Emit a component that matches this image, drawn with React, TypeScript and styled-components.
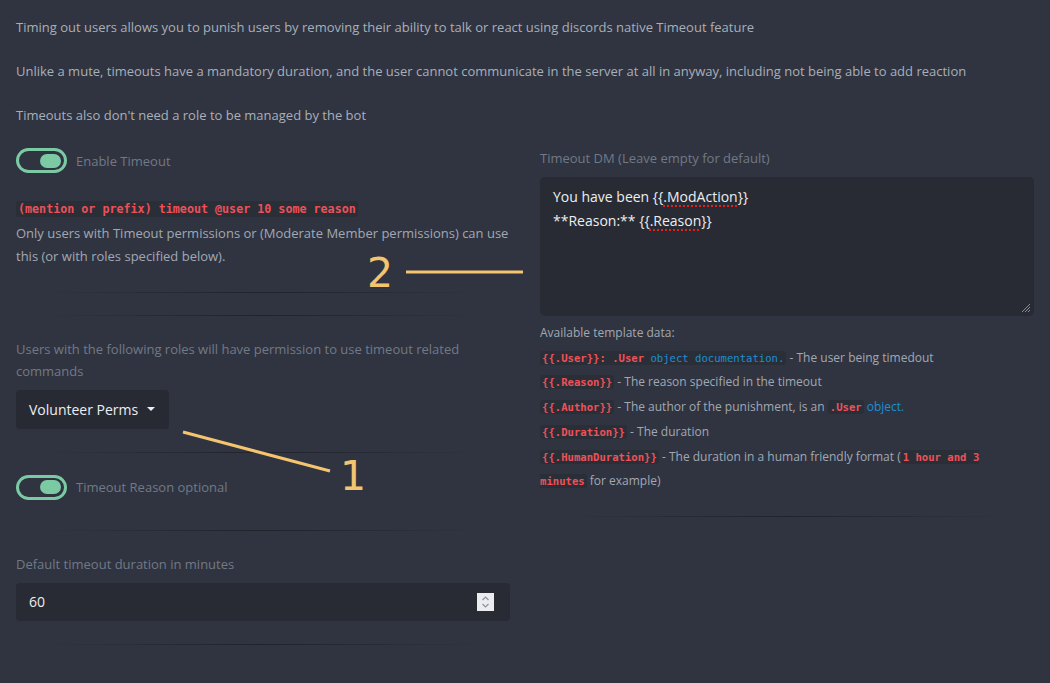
import React from 'react';
import styled, { createGlobalStyle } from 'styled-components';

const GlobalStyle = createGlobalStyle`
  html, body {
    margin: 0;
    padding: 0;
    background: #2f3440;
  }
  body {
    font-family: "Open Sans", "Noto Sans", sans-serif;
    color: #a9afba;
  }
  * { box-sizing: border-box; }
`;

const Page = styled.div`
  position: relative;
  width: 1050px;
  height: 683px;
  overflow: hidden;
  padding: 17px 16px 0;
`;

const Intro = styled.p`
  margin: 0 0 24px;
  font-size: 13px;
  line-height: 20px;
  color: #a9afba;
`;

const Row = styled.div`
  display: grid;
  grid-template-columns: 494px 494px;
  column-gap: 30px;
  margin-top: -2px;
`;

const Column = styled.div`
  display: flex;
  flex-direction: column;
`;

const ToggleRow = styled.label<{ $top?: number }>`
  display: flex;
  align-items: center;
  gap: 9px;
  height: 25px;
  margin-top: ${p => p.$top ?? 0}px;
  font-size: 13px;
  color: #727986;
`;

const Switch = styled.span`
  position: relative;
  display: inline-block;
  width: 51px;
  height: 25px;
  border: 3px solid #7ccaa4;
  border-radius: 13px;

  &::after {
    content: '';
    position: absolute;
    right: 3px;
    top: 2.5px;
    width: 21px;
    height: 14px;
    border-radius: 7px;
    background: #7ccaa4;
  }
`;

const Help = styled.p`
  margin: 24px 0 0;
  font-size: 13px;
  line-height: 23.5px;
  color: #a2a8b3;
`;

const Code = styled.code<{ $size?: number }>`
  font-family: "DejaVu Sans Mono", "Liberation Mono", monospace;
  font-size: ${p => p.$size ?? 11.7}px;
  font-weight: bold;
  color: #ee5159;
  background: #2a2e37;
  padding: 1px 2px;
  border-radius: 3px;
`;

const CodeLink = styled.span`
  color: #1d8ed3;
  font-weight: normal;
`;

const Link = styled.span`
  color: #1d8ed3;
`;

const Divider = styled.div<{ $top: number }>`
  height: 1px;
  margin-top: ${p => p.$top}px;
  background: linear-gradient(to right, rgba(30, 33, 40, 0) 5%, rgba(30, 33, 40, 0.9) 50%, rgba(30, 33, 40, 0) 95%);
`;

const FieldLabel = styled.div<{ $top?: number }>`
  margin-top: ${p => p.$top ?? 0}px;
  font-size: 13px;
  line-height: 22px;
  color: #727986;
`;

const Dropdown = styled.button`
  display: flex;
  align-items: center;
  gap: 9px;
  width: 153px;
  height: 39px;
  margin-top: 8px;
  padding: 0 13px;
  border: none;
  border-radius: 4px;
  background: #272a32;
  color: #eceef2;
  font-family: "Open Sans", "Noto Sans", sans-serif;
  font-size: 14px;
`;

const Caret = styled.span`
  width: 0;
  height: 0;
  margin-top: -1px;
  border-left: 4px solid transparent;
  border-right: 4px solid transparent;
  border-top: 4px solid #eceef2;
`;

const NumberBox = styled.div`
  display: flex;
  align-items: center;
  height: 38px;
  margin-top: 8px;
  padding: 0 16px 0 13px;
  border-radius: 4px;
  background: #282b33;
`;

const NumberInput = styled.input`
  flex: 1;
  border: none;
  outline: none;
  background: transparent;
  color: #eceef2;
  font-family: "Open Sans", "Noto Sans", sans-serif;
  font-size: 14px;
  padding: 0;
`;

const Spinner = styled.span`
  display: flex;
  align-items: center;
  justify-content: center;
  width: 17px;
  height: 18px;
  background: #ebebf0;
`;

const TextBox = styled.div`
  position: relative;
  height: 139px;
  margin-top: 8px;
  padding: 8px 13px;
  border-radius: 5px;
  background: #282b33;
  color: #eceef2;
  font-size: 14px;
  line-height: 24px;
`;

const Misspelt = styled.span`
  text-decoration: underline dotted #e5201c;
  text-decoration-thickness: 2px;
  text-underline-offset: 3px;
`;

const Grip = styled.svg`
  position: absolute;
  right: 3px;
  bottom: 3px;
`;

const TemplateList = styled.div`
  margin-top: 5px;
  padding-right: 45px;
  font-size: 12px;
  line-height: 24.7px;
  color: #a2a8b3;
`;

const Marker = styled.span<{ $x: number; $y: number }>`
  position: absolute;
  left: ${p => p.$x}px;
  top: ${p => p.$y}px;
  font-family: "DejaVu Sans", sans-serif;
  font-size: 41px;
  line-height: 1;
  color: #f5c46e;
`;

const Overlay = styled.svg`
  position: absolute;
  left: 0;
  top: 0;
  pointer-events: none;
`;

const Toggle: React.FC<{ label: string; top?: number }> = ({ label, top }) => (
  <ToggleRow $top={top}>
    <Switch />
    {label}
  </ToggleRow>
);

const App: React.FC = () => (
  <>
    <GlobalStyle />
    <Page>
      <Intro>Timing out users allows you to punish users by removing their ability to talk or react using discords native Timeout feature</Intro>
      <Intro>Unlike a mute, timeouts have a mandatory duration, and the user cannot communicate in the server at all in anyway, including not being able to add reaction</Intro>
      <Intro>Timeouts also don't need a role to be managed by the bot</Intro>

      <Row>
        <Column>
          <Toggle label="Enable Timeout" top={1} />
          <Help>
            <Code>(mention or prefix) timeout @user 10 some reason</Code>
            <br />
            Only users with Timeout permissions or (Moderate Member permissions) can use this (or with roles specified below).
          </Help>
          <Divider $top={23} />
          <Divider $top={22} />
          <FieldLabel $top={22}>Users with the following roles will have permission to use timeout related commands</FieldLabel>
          <Dropdown>
            Volunteer Perms
            <Caret />
          </Dropdown>
          <Divider $top={23} />
          <Toggle label="Timeout Reason optional" top={22} />
          <Divider $top={30} />
          <FieldLabel $top={22}>Default timeout duration in minutes</FieldLabel>
          <NumberBox>
            <NumberInput defaultValue="60" />
            <Spinner>
              <svg width="9" height="14" viewBox="0 0 9 14">
                <path d="M1.5 5 L4.5 2 L7.5 5 M1.5 9 L4.5 12 L7.5 9" fill="none" stroke="#8f929b" strokeWidth="1.2" />
              </svg>
            </Spinner>
          </NumberBox>
          <Divider $top={23} />
        </Column>

        <Column>
          <FieldLabel>Timeout DM (Leave empty for default)</FieldLabel>
          <TextBox>
            You have been {'{{'}<Misspelt>.ModAction</Misspelt>{'}}'}
            <br />
            **Reason:** {'{{'}<Misspelt>.Reason</Misspelt>{'}}'}
            <Grip width="12" height="12" viewBox="0 0 12 12">
              <path d="M11 3 L3 11 M11 6 L6 11 M11 9 L9 11" stroke="#8a8d95" strokeWidth="1" />
            </Grip>
          </TextBox>
          <TemplateList>
            Available template data:
            <br />
            <Code $size={10.6}>{'{{.User}}: .User '}<CodeLink>object documentation.</CodeLink></Code> - The user being timedout
            <br />
            <Code $size={10.6}>{'{{.Reason}}'}</Code> - The reason specified in the timeout
            <br />
            <Code $size={10.6}>{'{{.Author}}'}</Code> - The author of the punishment, is an <Code $size={10.6}>.User</Code> <Link>object.</Link>
            <br />
            <Code $size={10.6}>{'{{.Duration}}'}</Code> - The duration
            <br />
            <Code $size={10.6}>{'{{.HumanDuration}}'}</Code> - The duration in a human friendly format (<Code $size={10.6}>1 hour and 3 minutes</Code> for example)
          </TemplateList>
          <Divider $top={22} />
        </Column>
      </Row>

      <Overlay width="1050" height="683">
        <line x1="406" y1="272" x2="523" y2="272" stroke="#f5c46e" strokeWidth="3" />
        <line x1="183" y1="432" x2="330" y2="471" stroke="#f5c46e" strokeWidth="3" />
      </Overlay>
      <Marker $x={367} $y={253}>2</Marker>
      <Marker $x={340} $y={456}>1</Marker>
    </Page>
  </>
);

export default App;
